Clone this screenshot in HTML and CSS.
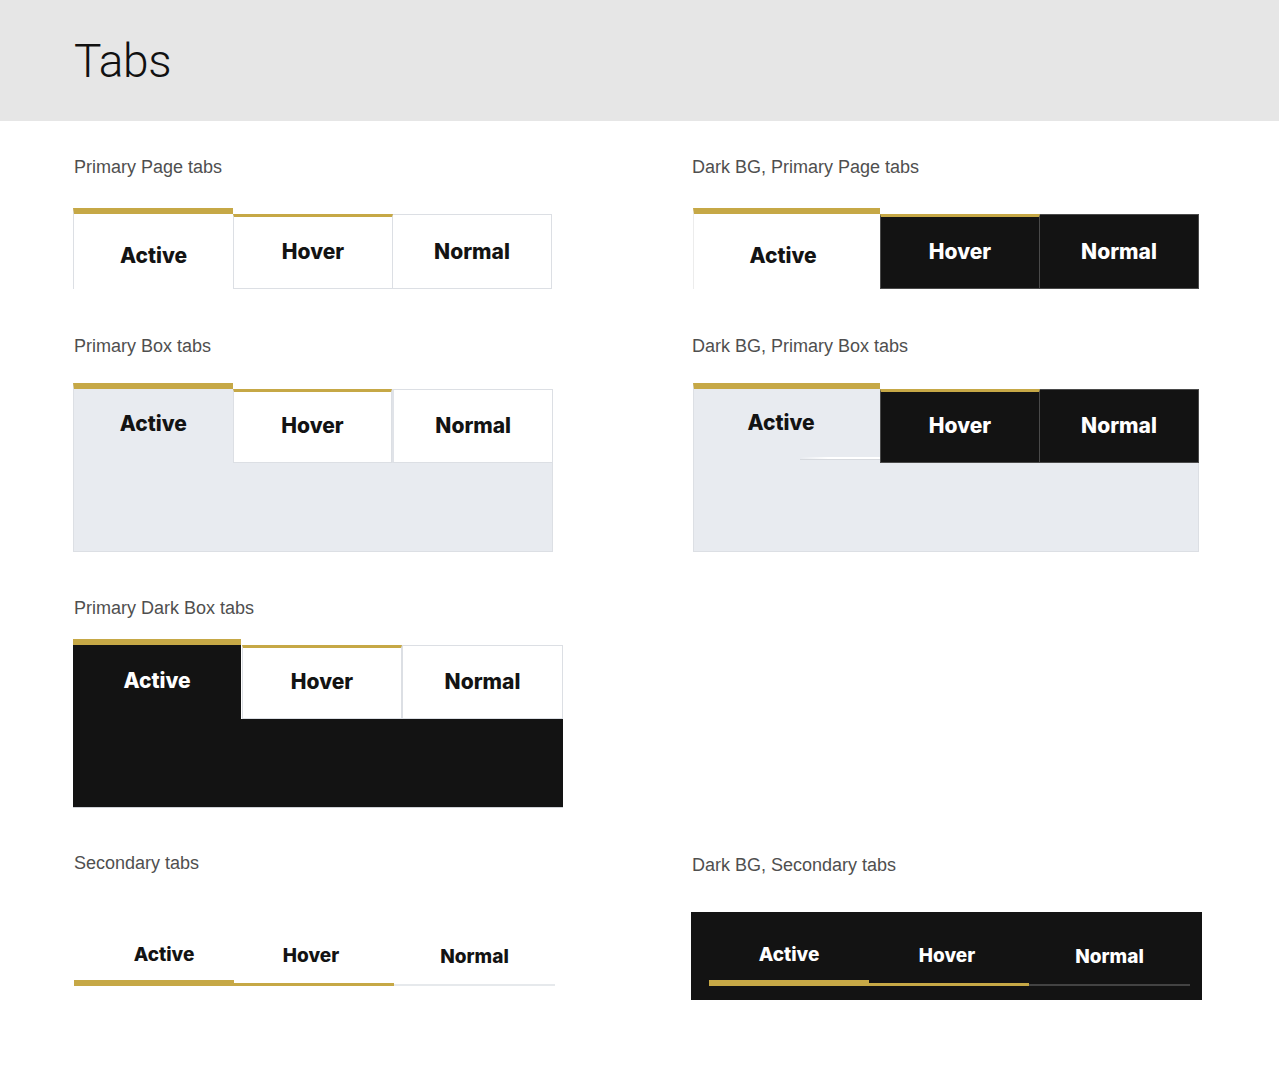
FILE: index.html
```html
<!DOCTYPE html>
<html lang="en">
<head>
<meta charset="utf-8">
<title>Tabs</title>
<link rel="stylesheet" href="styles.css">
</head>
<body>
<header class="hero"><h1 class="hero-title">Tabs</h1></header>
<main class="sheet">
  <div class="row row-1">
    <section class="demo">
      <h2 class="demo-label">Primary Page tabs</h2>
      <div class="page-tabs">
        <div class="tab page-tab is-active">Active</div>
        <div class="tab page-tab is-hover">Hover</div>
        <div class="tab page-tab is-normal">Normal</div>
      </div>
    </section>
    <section class="demo demo-right">
      <h2 class="demo-label">Dark BG, Primary Page tabs</h2>
      <div class="page-tabs page-tabs-dark">
        <div class="tab page-tab is-active">Active</div>
        <div class="tab page-tab is-hover">Hover</div>
        <div class="tab page-tab is-normal">Normal</div>
      </div>
    </section>
  </div>

  <div class="row row-2">
    <section class="demo">
      <h2 class="demo-label">Primary Box tabs</h2>
      <div class="box-tabs">
        <div class="box-row">
          <div class="tab box-tab is-active">Active</div>
          <div class="tab box-tab is-hover">Hover</div>
          <div class="tab box-tab is-normal">Normal</div>
        </div>
        <div class="box-panel"></div>
      </div>
    </section>
    <section class="demo demo-right">
      <h2 class="demo-label">Dark BG, Primary Box tabs</h2>
      <div class="box-tabs box-tabs-dark">
        <div class="box-row">
          <div class="tab box-tab is-active">Active</div>
          <div class="tab box-tab is-hover">Hover</div>
          <div class="tab box-tab is-normal">Normal</div>
        </div>
        <div class="box-panel"></div>
      </div>
    </section>
  </div>

  <div class="row row-3">
    <section class="demo">
      <h2 class="demo-label">Primary Dark Box tabs</h2>
      <div class="dark-box">
        <div class="box-row">
          <div class="tab dbox-tab is-active">Active</div>
          <div class="tab dbox-tab is-hover">Hover</div>
          <div class="tab dbox-tab is-normal">Normal</div>
        </div>
        <div class="dark-panel"></div>
      </div>
    </section>
  </div>

  <div class="row row-4">
    <section class="demo">
      <h2 class="demo-label">Secondary tabs</h2>
      <div class="sec-tabs">
        <div class="tab sec-tab is-active">Active</div>
        <div class="tab sec-tab is-hover">Hover</div>
        <div class="tab sec-tab is-normal">Normal</div>
      </div>
    </section>
    <section class="demo demo-right">
      <h2 class="demo-label label-low">Dark BG, Secondary tabs</h2>
      <div class="sec-box">
        <div class="sec-tabs sec-tabs-dark">
          <div class="tab sec-tab is-active">Active</div>
          <div class="tab sec-tab is-hover">Hover</div>
          <div class="tab sec-tab is-normal">Normal</div>
        </div>
      </div>
    </section>
  </div>
</main>
</body>
</html>
```

FILE: styles.css
```css
* { box-sizing: border-box; }

body {
  margin: 0;
  background: #ffffff;
  font-family: "Liberation Sans", Arial, sans-serif;
  color: #111111;
}

.hero {
  background: #e6e6e6;
  height: 121px;
  padding: 33px 0 0 74px;
}

.hero-title {
  margin: 0;
  font-family: Roboto, "Liberation Sans", sans-serif;
  font-weight: 300;
  font-size: 46px;
  line-height: 56px;
  letter-spacing: -0.3px;
  color: #111111;
}

.sheet {
  padding-left: 73px;
}

.row { display: flex; }
.row-1 { margin-top: 36px; }
.row-2 { margin-top: 47px; }
.row-3 { margin-top: 46px; }
.row-4 { margin-top: 45px; }

.demo {
  width: 620px;
  flex-shrink: 0;
}

.demo-label {
  margin: 0;
  padding-left: 1px;
  font-family: "Liberation Sans", Arial, sans-serif;
  font-weight: 400;
  font-size: 18px;
  line-height: 20px;
  color: #4f4f4f;
}

.demo-right .demo-label { padding-left: 0; margin-left: -1px; }
.demo-right .label-low { margin-top: 2px; }

/* shared tab */
.tab {
  display: flex;
  align-items: center;
  justify-content: center;
  font-family: Inter, Lato, "Liberation Sans", sans-serif;
  font-weight: 800;
  font-size: 21px;
  line-height: 1.2;
  color: #131313;
}

/* ---------- Primary page tabs ---------- */
.page-tabs {
  display: flex;
  align-items: flex-end;
  margin-top: 31px;
}

.page-tab {
  width: 160px;
  height: 75px;
  background: #ffffff;
  border: 1px solid #dcdfe4;
}

.page-tab.is-active {
  height: 81px;
  border-width: 6px 0 0 1px;
  border-top-color: #c6a846;
  padding-top: 8px;
}

.page-tab.is-hover {
  border-top: 3px solid #c6a846;
  padding-bottom: 2px;
}

.page-tab.is-normal {
  width: 159px;
  border-left: 0;
}

.page-tabs-dark .page-tab.is-active {
  width: 187px;
  border-left-color: #ececec;
  padding-right: 8px;
}

.page-tabs-dark .page-tab.is-hover,
.page-tabs-dark .page-tab.is-normal {
  background: #131313;
  color: #ffffff;
  border-color: #4a4a4a;
}

.page-tabs-dark .page-tab.is-hover { border-top-color: #c6a846; }

/* ---------- Primary box tabs ---------- */
.box-tabs {
  width: 480px;
  margin-top: 27px;
}

.box-row {
  display: flex;
  align-items: flex-end;
}

.box-tab {
  width: 160px;
  height: 74px;
  background: #ffffff;
  border: 1px solid #dcdfe4;
}

.box-tab.is-active {
  height: 80px;
  border-width: 6px 0 0 1px;
  border-top-color: #c6a846;
  background: #e8ebf0;
  padding-bottom: 4px;
}

.box-tab.is-hover {
  border-top: 3px solid #c6a846;
  padding-bottom: 3px;
}

.box-tab.is-normal {
  width: 161px;
  border-left: 2px solid #e0e3e8;
}

.box-panel {
  height: 89px;
  background: #e8ebf0;
  border: 1px solid #dcdfe4;
  border-top: 0;
}

.box-tabs-dark { width: 506px; }

.box-tabs-dark .box-tab.is-active {
  width: 187px;
  position: relative;
  padding-bottom: 6px;
  padding-right: 12px;
}

.box-tabs-dark .box-tab.is-active::after {
  content: "";
  position: absolute;
  left: 106px;
  right: 0;
  bottom: 4px;
  height: 2px;
  background: linear-gradient(90deg, rgba(255,255,255,0), #ffffff 35%);
  box-shadow: 0 1px 0 #d6d9de;
}

.box-tabs-dark .box-tab.is-hover,
.box-tabs-dark .box-tab.is-normal {
  background: #131313;
  color: #ffffff;
  border-color: #4a4a4a;
}

.box-tabs-dark .box-tab.is-hover { border-top-color: #c6a846; }

.box-tabs-dark .box-tab.is-normal {
  width: 159px;
  border-left: 0;
}

/* ---------- Primary dark box tabs ---------- */
.dark-box {
  width: 490px;
  margin-top: 21px;
}

.dbox-tab {
  width: 160px;
  height: 74px;
  background: #ffffff;
  border: 1px solid #dcdfe4;
}

.dbox-tab.is-active {
  width: 168px;
  height: 80px;
  border-width: 6px 0 0 0;
  border-top-color: #c6a846;
  background: #131313;
  color: #ffffff;
  padding-bottom: 3px;
}

.dbox-tab.is-hover {
  margin-left: 1px;
  border-top: 3px solid #c6a846;
  padding-bottom: 2px;
}

.dbox-tab.is-normal { width: 161px; }

.dark-panel {
  height: 89px;
  background: #131313;
  border-bottom: 1px solid #cfd2d7;
}

/* ---------- Secondary tabs ---------- */
.sec-tabs {
  display: flex;
  margin-top: 39px;
  padding-left: 1px;
}

.sec-tab {
  width: 160px;
  height: 74px;
  padding-top: 18px;
  font-size: 19px;
  border-bottom: 2px solid #e6e9ec;
}

.sec-tab.is-active {
  border-bottom: 6px solid #c6a846;
  padding-left: 20px;
}

.sec-tab.is-hover {
  border-bottom: 3px solid #c6a846;
  padding-right: 6px;
}

.sec-tab.is-normal { width: 161px; }

.sec-box {
  width: 511px;
  margin-left: -2px;
  margin-top: 37px;
  background: #131313;
  padding: 0 12px 14px 18px;
}

.sec-tabs-dark {
  margin-top: 0;
  padding-left: 0;
}

.sec-tabs-dark .sec-tab { color: #ffffff; }
.sec-tabs-dark .sec-tab.is-active { padding-left: 0; }
.sec-tabs-dark .sec-tab.is-hover { padding-right: 4px; }
.sec-tabs-dark .sec-tab.is-normal { border-bottom-color: #434343; }
```
